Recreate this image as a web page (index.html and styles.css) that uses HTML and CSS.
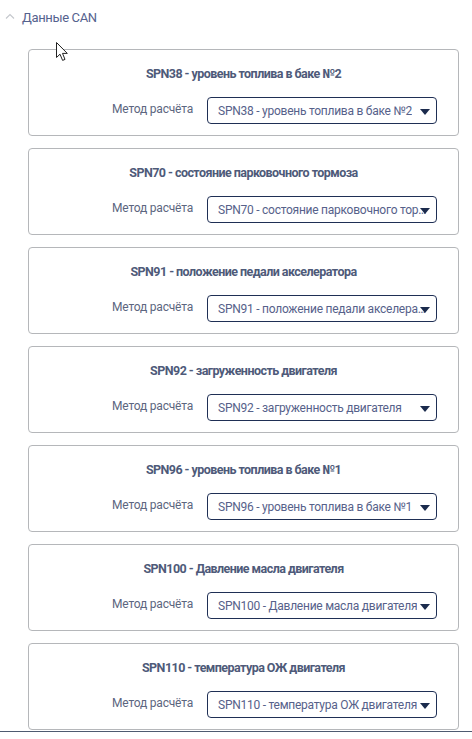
FILE: index.html
```html
<!DOCTYPE html>
<html lang="ru">
<head>
  <meta charset="UTF-8">
  <meta name="viewport" content="width=device-width, initial-scale=1.0">
  <link rel="stylesheet" href="styles.css">
  <title>Данные CAN</title>
</head>
<body>
  <div class="section">
    <div class="section-head">
      <svg class="chevron" width="10" height="6" viewBox="0 0 10 6"><path d="M1 5.5 L5 1.5 L9 5.5" fill="none" stroke="#c4c7cc" stroke-width="1.1"/></svg>
      <span>Данные CAN</span>
    </div>

    <div class="cards">
      <div class="card">
        <div class="card-title">SPN38 - уровень топлива в баке №2</div>
        <div class="row">
          <span class="label">Метод расчёта</span>
          <div class="select"><span class="select-text">SPN38 - уровень топлива в баке №2</span><span class="arrow"></span></div>
        </div>
      </div>
      <div class="card">
        <div class="card-title">SPN70 - состояние парковочного тормоза</div>
        <div class="row">
          <span class="label">Метод расчёта</span>
          <div class="select"><span class="select-text">SPN70 - состояние парковочного тормоза</span><span class="arrow"></span></div>
        </div>
      </div>
      <div class="card">
        <div class="card-title">SPN91 - положение педали акселератора</div>
        <div class="row">
          <span class="label">Метод расчёта</span>
          <div class="select"><span class="select-text">SPN91 - положение педали акселератора</span><span class="arrow"></span></div>
        </div>
      </div>
      <div class="card">
        <div class="card-title">SPN92 - загруженность двигателя</div>
        <div class="row">
          <span class="label">Метод расчёта</span>
          <div class="select"><span class="select-text">SPN92 - загруженность двигателя</span><span class="arrow"></span></div>
        </div>
      </div>
      <div class="card">
        <div class="card-title">SPN96 - уровень топлива в баке №1</div>
        <div class="row">
          <span class="label">Метод расчёта</span>
          <div class="select"><span class="select-text">SPN96 - уровень топлива в баке №1</span><span class="arrow"></span></div>
        </div>
      </div>
      <div class="card">
        <div class="card-title">SPN100 - Давление масла двигателя</div>
        <div class="row">
          <span class="label">Метод расчёта</span>
          <div class="select"><span class="select-text">SPN100 - Давление масла двигателя</span><span class="arrow"></span></div>
        </div>
      </div>
      <div class="card">
        <div class="card-title">SPN110 - температура ОЖ двигателя</div>
        <div class="row">
          <span class="label">Метод расчёта</span>
          <div class="select"><span class="select-text">SPN110 - температура ОЖ двигателя</span><span class="arrow"></span></div>
        </div>
      </div>
    </div>
  </div>

  <div class="footer-line"></div>

  <!-- mouse pointer -->
  <svg class="cursor" width="13" height="20" viewBox="0 0 13 20">
    <path d="M0.5 0.5 L0.5 15.5 L4 12.2 L6.6 18.4 L9 17.4 L6.5 11.4 L11.3 11.4 Z" fill="#fff" stroke="#222" stroke-width="1" stroke-linejoin="round"/>
  </svg>
</body>
</html>
```

FILE: styles.css
```css
body {
    margin: 0;
    width: 472px;
    height: 739px;
    overflow: hidden;
    position: relative;
    background: #ffffff;
    font-family: Roboto, "Noto Sans", sans-serif;
    color: #4b5877;
}

.section-head {
    display: flex;
    align-items: center;
    gap: 7px;
    padding: 8px 0 0 5px;
    height: 18px;
    font-size: 13px;
    letter-spacing: -0.35px;
    color: #55628e;
}

.chevron {
    margin-top: -2px;
}

.cards {
    display: flex;
    flex-direction: column;
    gap: 12px;
    margin: 23px 13px 0 28px;
}

.card {
    border: 1px solid #b5b7ba;
    border-radius: 4px;
    padding: 15px 0 11px;
}

.card-title {
    text-align: center;
    font-size: 12.5px;
    font-weight: bold;
    letter-spacing: -0.55px;
    line-height: 17px;
    margin-bottom: 15px;
    color: #4e5a79;
}

.row {
    display: flex;
    justify-content: flex-end;
    align-items: center;
    gap: 14px;
    padding-right: 21px;
}

.label {
    font-size: 12px;
    letter-spacing: -0.2px;
    color: #5c6680;
    margin-top: -4px;
}

.select {
    position: relative;
    box-sizing: border-box;
    width: 230px;
    height: 27px;
    border: 1px solid #1f2f55;
    border-radius: 4px;
    padding: 0 6px 0 10px;
    display: flex;
    align-items: center;
}

.select-text {
    font-size: 12px;
    letter-spacing: -0.25px;
    color: #56618a;
    white-space: nowrap;
    overflow: hidden;
    text-overflow: ellipsis;
}

.arrow {
    position: absolute;
    right: 6px;
    top: 11px;
    width: 0;
    height: 0;
    border-left: 5px solid transparent;
    border-right: 5px solid transparent;
    border-top: 6px solid #1b2b4d;
}

.footer-line {
    position: absolute;
    left: 0;
    right: 0;
    top: 731px;
    bottom: 0;
    background: #ffffff;
    border-top: 1px solid #4e5a70;
}

.cursor {
    position: absolute;
    left: 56px;
    top: 42px;
}
```
